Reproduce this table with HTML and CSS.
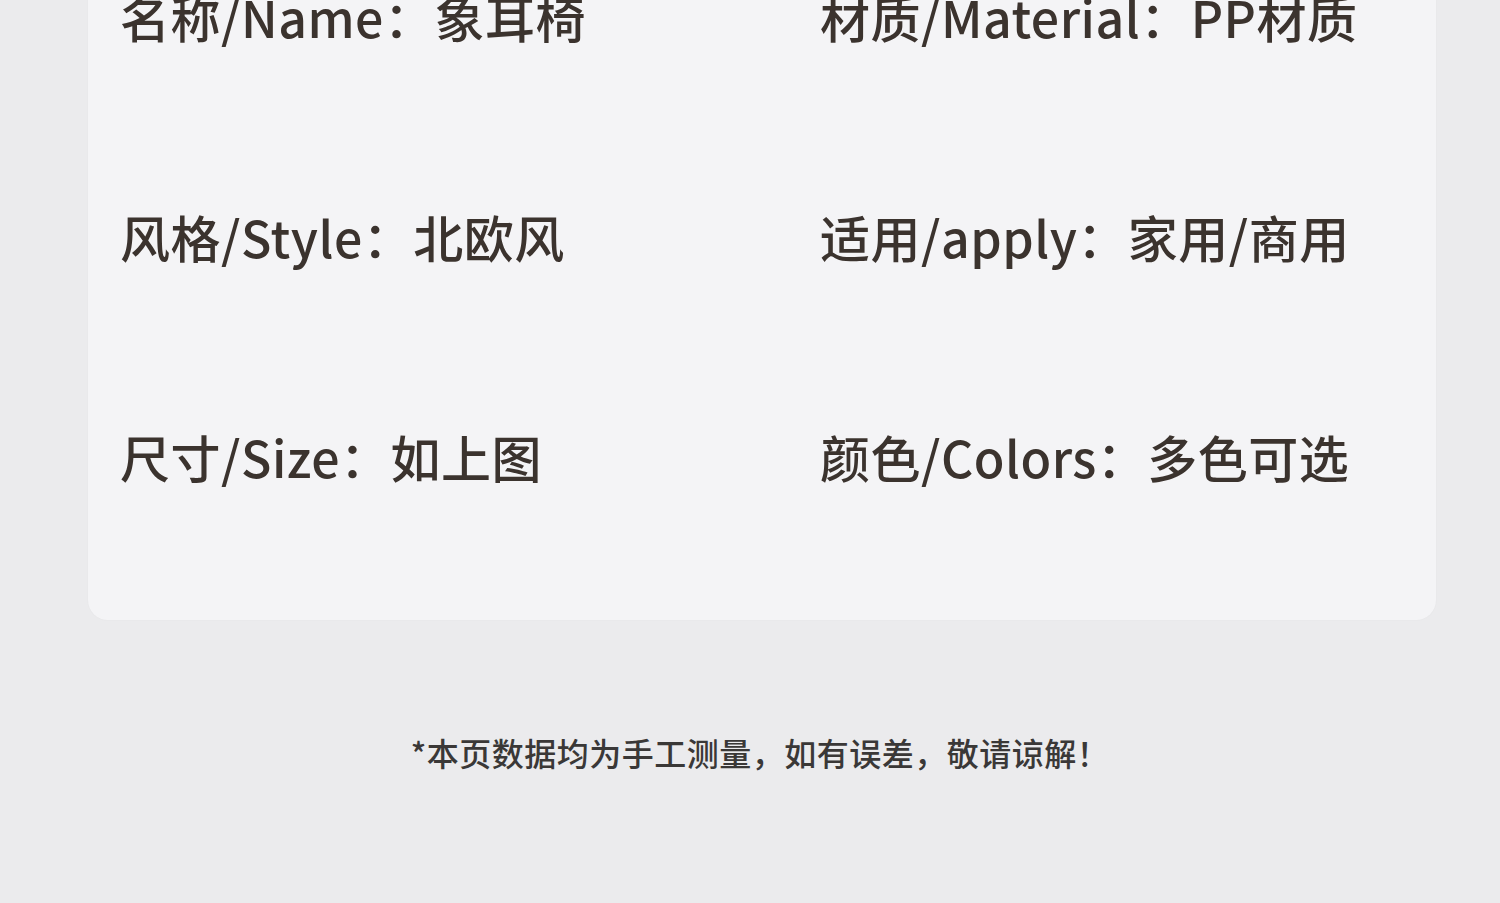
FILE: index.html
```html
<!DOCTYPE html>
<html lang="zh-CN">
<head>
    <meta charset="UTF-8">
    <title>产品参数</title>
    <link rel="stylesheet" href="styles.css">
</head>
<body>
    <div class="spec-card">
        <div class="spec-grid">
            <div class="spec">名称/Name：象耳椅</div>
            <div class="spec">材质/Material：PP材质</div>
            <div class="spec">风格/Style：北欧风</div>
            <div class="spec">适用/apply：家用/商用</div>
            <div class="spec">尺寸/Size：如上图</div>
            <div class="spec">颜色/Colors：多色可选</div>
        </div>
    </div>

    <p class="note">*本页数据均为手工测量，如有误差，敬请谅解！</p>
</body>
</html>
```

FILE: styles.css
```css
html {
    height: 100%;
}

body {
    margin: 0;
    min-height: 100%;
    background: #ebebed;
    font-family: "Noto Sans CJK SC", "Noto Sans", sans-serif;
    color: #3b332e;
    overflow: hidden;
}

.spec-card {
    margin: -60px 64px 0 88px;
    padding: 51px 32px 139px;
    background: #f4f4f6;
    border-radius: 20px;
    box-shadow: 0 0 2px rgba(0, 0, 0, 0.04);
}

.spec-grid {
    display: grid;
    grid-template-columns: 700px 1fr;
    row-gap: 170px;
}

.spec {
    font-size: 50px;
    line-height: 50px;
    font-weight: 500;
    letter-spacing: 0.5px;
    white-space: nowrap;
}

.note {
    margin: 112px 0 0;
    padding-left: 20px;
    text-align: center;
    font-size: 32px;
    line-height: 40px;
    font-weight: 500;
    letter-spacing: 0.5px;
    color: #3a3837;
}
```
